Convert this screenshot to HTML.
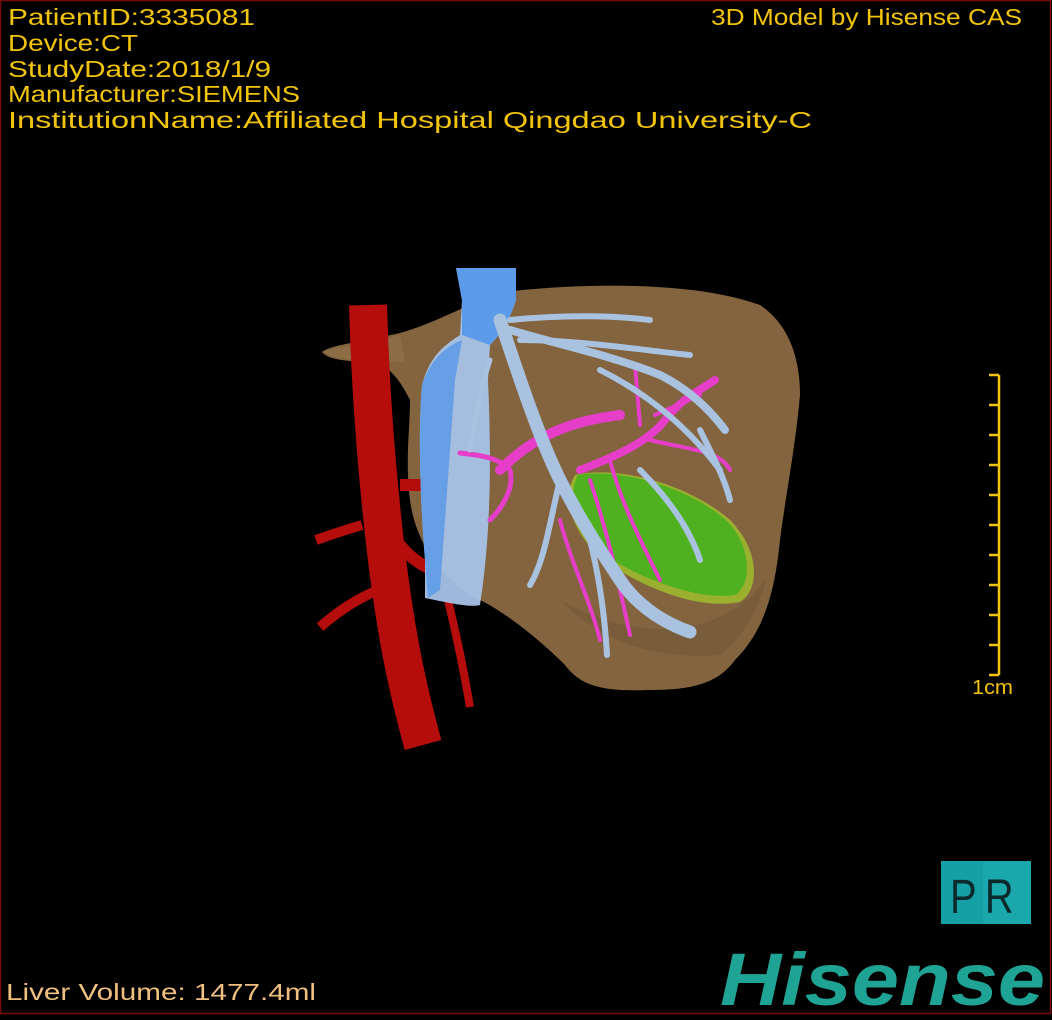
<!DOCTYPE html>
<html><head><meta charset="utf-8"><style>
html,body{margin:0;padding:0;background:#000;}
body{width:1052px;height:1020px;overflow:hidden;position:relative;}
svg{position:absolute;left:0;top:0;}
</style></head><body>
<svg width="1052" height="1020" viewBox="0 0 1052 1020" xmlns="http://www.w3.org/2000/svg">
<rect x="0" y="0" width="1052" height="1020" fill="#000"/>
<rect x="0.5" y="0.5" width="1050" height="1013" fill="none" stroke="#7a0a0a" stroke-width="1.5"/>

<g font-family="Liberation Sans, sans-serif" font-size="23" fill="#f2c40c">
<text x="8" y="25" textLength="247" lengthAdjust="spacingAndGlyphs">PatientID:3335081</text>
<text x="8" y="51" textLength="130" lengthAdjust="spacingAndGlyphs">Device:CT</text>
<text x="8" y="77" textLength="263" lengthAdjust="spacingAndGlyphs">StudyDate:2018/1/9</text>
<text x="8" y="102" textLength="292" lengthAdjust="spacingAndGlyphs">Manufacturer:SIEMENS</text>
<text x="8" y="128" textLength="804" lengthAdjust="spacingAndGlyphs">InstitutionName:Affiliated Hospital Qingdao University-C</text>
<text x="711" y="25" textLength="311" lengthAdjust="spacingAndGlyphs">3D Model by Hisense CAS</text>
</g>
<text x="6" y="1000" font-family="Liberation Sans, sans-serif" font-size="23" fill="#f0c080" textLength="310" lengthAdjust="spacingAndGlyphs">Liver Volume: 1477.4ml</text>

<g stroke="#f2c40c" stroke-width="2.5" fill="none">
<line x1="999" y1="375" x2="999" y2="675"/>
<path d="M989 375H999M989 405H999M989 435H999M989 465H999M989 495H999M989 525H999M989 555H999M989 585H999M989 615H999M989 645H999M989 675H999"/>
</g>
<text x="972" y="694" font-family="Liberation Sans, sans-serif" font-size="20" fill="#f2c40c" textLength="41" lengthAdjust="spacingAndGlyphs">1cm</text>

<rect x="941" y="861" width="90" height="63" fill="#14a0a4"/>
<rect x="983" y="861" width="48" height="63" fill="#1aa8ac"/>
<text x="950" y="913" font-family="Liberation Sans, sans-serif" font-size="48" fill="#0a2a2c" textLength="72" lengthAdjust="spacingAndGlyphs" letter-spacing="10">PR</text>

<text x="720" y="1005" font-family="Liberation Sans, sans-serif" font-weight="bold" font-style="italic" font-size="74" fill="#1fa394" textLength="325" lengthAdjust="spacingAndGlyphs">Hisense</text>

<!-- LIVER -->
<path d="M322 352 C330 345 360 342 400 333 C440 322 480 296 513 291 C600 282 700 283 760 305 C790 325 800 360 800 395 C795 450 785 500 780 540 C775 590 765 630 735 660 C720 680 700 690 650 690 C600 692 580 685 565 665 C540 640 505 612 480 600 C440 580 415 540 410 500 C405 460 410 430 410 400 C400 380 390 368 380 365 C355 360 330 362 322 352 Z" fill="#83643f"/>
<path d="M322 352 C340 347 370 344 400 335 L405 362 C380 362 340 362 322 352 Z" fill="#8c6d46"/>
<path d="M560 600 C600 640 650 660 720 655 C740 640 760 610 765 580 C730 630 650 650 560 600Z" fill="#6f5434" opacity="0.5"/>

<path d="M575 475 C620 465 690 485 730 520 C760 550 760 590 740 602 C700 610 650 590 610 565 C575 540 560 500 575 475 Z" fill="#9cb030"/>
<path d="M578 475 C620 468 690 487 728 522 C752 548 752 585 735 595 C700 600 650 582 612 560 C578 535 565 500 578 475 Z" fill="#4fb11f"/>

<g stroke="#b50c0c" fill="none" stroke-linecap="butt">
<path d="M368 305 C370 380 375 460 387 560 C397 640 408 690 423 745" stroke-width="38"/>
<path d="M362 525 C345 530 330 535 316 540" stroke-width="10"/>
<path d="M378 590 C355 600 340 610 320 627" stroke-width="10"/>
<path d="M400 545 C412 560 425 568 440 572" stroke-width="12"/>
<path d="M400 485 L425 485" stroke-width="12"/>
<path d="M448 600 C455 630 462 660 470 707" stroke-width="8"/>
</g>

<path d="M456 268 L516 268 L516 300 C510 320 500 335 490 345 L488 380 C492 470 490 540 480 605 C470 608 445 602 425 598 L425 560 C420 500 418 430 422 385 C430 355 445 345 460 335 L462 300 Z" fill="#a6c2e8" opacity="0.95"/>
<path d="M456 268 L516 268 L516 300 C510 320 500 335 490 345 L462 335 L462 300 Z" fill="#5c9bea"/>
<path d="M422 385 C432 355 450 345 462 340 L455 380 L440 590 L428 598 L425 560 C420 500 418 430 422 385Z" fill="#5a9ae6" opacity="0.85"/>

<g stroke="#e63ec8" fill="none" stroke-linecap="round">
<path d="M500 470 C540 430 580 420 620 415" stroke-width="10"/>
<path d="M580 470 C620 455 650 440 665 420 C680 400 700 390 715 380" stroke-width="8"/>
<path d="M640 425 L635 365 M655 415 L700 395 M650 440 C690 450 720 450 730 470 M610 460 C620 500 640 540 660 580 M590 480 C610 540 620 590 630 635" stroke-width="4"/>
<path d="M460 453 C480 455 500 458 510 470 C515 490 500 510 490 520" stroke-width="5"/>
<path d="M560 520 C570 560 590 600 600 640" stroke-width="4"/>
</g>

<g stroke="#a8c2e0" fill="none" stroke-linecap="round">
<path d="M500 320 C520 380 540 440 560 480 C580 520 600 550 620 580 C640 610 670 625 690 632" stroke-width="13"/>
<path d="M510 330 C560 345 610 355 660 375 C690 390 710 410 725 430" stroke-width="8"/>
<path d="M510 320 C560 315 610 315 650 320 M520 340 C580 340 640 350 690 355 M600 370 C650 395 690 430 720 470 M560 480 C550 520 545 560 530 585 M590 540 C600 580 605 620 607 655 M640 470 C670 500 690 530 700 560 M700 430 C715 460 725 480 730 500" stroke-width="6"/>
<path d="M490 360 C480 390 475 420 470 450" stroke-width="5"/>
</g>
</svg>
</body></html>
